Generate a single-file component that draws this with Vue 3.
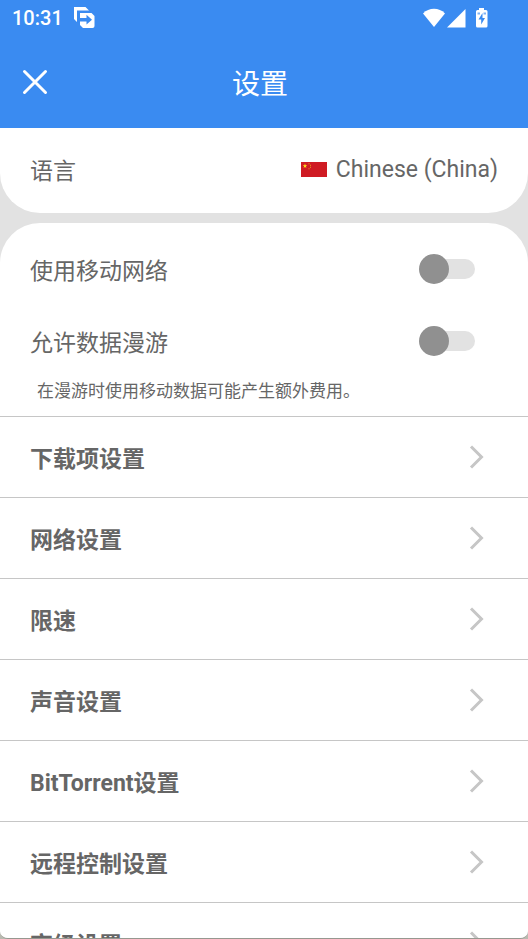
<script setup>
import { ref } from 'vue'

const mobileNetwork = ref(false)
const roaming = ref(false)
const sections = ['下载项设置', '网络设置', '限速', '声音设置', 'BitTorrent设置', '远程控制设置', '高级设置']
</script>

<template>
  <div class="screen">
    <header class="top">
      <div class="status">
        <time class="clock">10:31</time>
        <svg class="copy" width="21" height="22" viewBox="0 0 21 22" aria-hidden="true">
          <path d="M0 0H11.500L15 3.500H3V15L0 12Z" fill="#fff" />
          <path d="M6 6H17.500L20.500 9V19a2 2 0 0 1-2 2H9L6 18Z" fill="#fff" />
          <path d="M6 11H12.500V7.800L18 12.700L12.500 17.500V14.400H6Z" fill="#3a8bf1" />
        </svg>
        <svg class="system" width="66" height="20" viewBox="0 0 66 20" aria-hidden="true">
          <path d="M0 5.500C6-.7 16-.7 22 5.500L11 19Z" fill="#fff" />
          <path d="M24 19.500L42.500 1V19.500Z" fill="#fff" />
          <path d="M56 2V0H61V2H63Q64.500 2 64.500 3.500V18Q64.500 19.500 63 19.500H54.500Q53 19.500 53 18V3.500Q53 2 54.500 2Z" fill="#fff" />
          <path d="M59.500 5L55.500 11.500H58.200V16.500L62 10H59.500Z" fill="#3a8bf1" />
          <path d="M54.500 4.500H57V6.500H54.500ZM60.500 4.500H63V6.500H60.500Z" fill="#3a8bf1" opacity=".65" />
        </svg>
      </div>
      <div class="bar">
        <button class="close" type="button" aria-label="关闭">
          <svg width="26" height="26" viewBox="0 0 26 26" aria-hidden="true">
            <path d="M2.500 2.500L23.500 23.500M23.500 2.500L2.500 23.500" fill="none" stroke="#fff" stroke-width="3" stroke-linecap="round" />
          </svg>
        </button>
        <h1>设置</h1>
      </div>
    </header>

    <main>
      <section class="card language">
        <button class="language-row" type="button">
          <span class="label">语言</span>
          <span class="value">
            <svg width="26" height="15" viewBox="0 0 26 15" aria-hidden="true">
              <rect width="26" height="15" fill="#cf1b23" />
              <path d="M4 1.500L4.600 3.200H6.300L4.900 4.200L5.400 5.900L4 4.900L2.600 5.900L3.100 4.200L1.700 3.200H3.400Z" fill="#ffe21a" />
              <path d="M7.500 1.300h1v1h-1zM9 2.800h1v1H9zM9 4.800h1v1H9zM7.500 6.200h1v1h-1z" fill="#f0a01c" />
            </svg>
            Chinese (China)
          </span>
        </button>
      </section>

      <section class="card options">
        <label class="toggle">
          <span class="label">使用移动网络</span>
          <input v-model="mobileNetwork" type="checkbox" role="switch" />
        </label>
        <label class="toggle">
          <span class="label">允许数据漫游</span>
          <input v-model="roaming" type="checkbox" role="switch" />
        </label>
        <p class="note">在漫游时使用移动数据可能产生额外费用。</p>
        <nav>
          <a v-for="name in sections" :key="name" class="link" href="#">
            <span class="label">{{ name }}</span>
            <svg width="16" height="24" viewBox="0 0 16 24" aria-hidden="true">
              <path d="M2 1.500L12.500 12L2 22.500" fill="none" stroke="#c6c6c6" stroke-width="3" />
            </svg>
          </a>
        </nav>
      </section>
    </main>
  </div>
</template>

<style>
body {
  background: linear-gradient(90deg, #b9bab0 0 15%, #7d8b55 15% 72%, #b9bab0 72%);
}
</style>

<style scoped>
.screen {
  box-sizing: border-box;
  height: 100vh;
  overflow: hidden;
  background: #e2e2e2;
  border-bottom: 1px solid #969890;
  border-radius: 0 0 8px 8px;
  color: #666;
  font-family: Roboto, "Noto Sans CJK SC", sans-serif;
}
.top {
  background: #3a8bf1;
  color: #fff;
}
.status {
  display: flex;
  align-items: center;
  height: 36px;
  padding: 0 39px 0 12px;
}
.clock {
  font-size: 20px;
  font-weight: 500;
  line-height: 36px;
}
.copy {
  margin-left: 11px;
}
.system {
  margin-left: auto;
}
.bar {
  display: grid;
  grid-template-columns: 70px 1fr 78px;
  align-items: center;
  height: 92px;
}
.close {
  display: flex;
  padding: 0 0 0 22px;
  border: 0;
  background: none;
}
h1 {
  margin: 0;
  padding-top: 6px;
  font-size: 28px;
  font-weight: 400;
  line-height: 40px;
  text-align: center;
}
.card {
  background: #fff;
  font-size: 23px;
  line-height: 34px;
}
.language {
  border-radius: 0 0 40px 40px;
}
.language-row {
  display: flex;
  align-items: center;
  justify-content: space-between;
  width: 100%;
  height: 85px;
  padding: 0 30px 2px;
  border: 0;
  background: none;
  color: inherit;
  font: inherit;
}
.label {
  padding-top: 5px;
}
.value {
  display: flex;
  align-items: center;
  gap: 9px;
}
.options {
  margin-top: 10px;
  padding-top: 10px;
  border-radius: 40px 40px 0 0;
}
.toggle {
  display: flex;
  align-items: center;
  justify-content: space-between;
  height: 72px;
  padding: 0 53px 0 30px;
}
input {
  appearance: none;
  position: relative;
  display: flex;
  align-items: center;
  width: 56px;
  height: 30px;
  margin: 0;
}
input::before {
  content: "";
  flex: 1;
  height: 20px;
  margin-left: 8px;
  border-radius: 10px;
  background: #e2e2e2;
}
input::after {
  content: "";
  position: absolute;
  left: 0;
  width: 30px;
  height: 30px;
  border-radius: 50%;
  background: #909090;
}
input:checked::after {
  left: 26px;
  background: #3a8bf1;
}
.note {
  margin: 0;
  padding: 2px 37px 12px;
  font-size: 17px;
  line-height: 25px;
}
.link {
  display: flex;
  align-items: center;
  justify-content: space-between;
  height: 80px;
  padding: 0 43px 0 30px;
  border-top: 1px solid #c6c6c6;
  color: inherit;
  font-weight: 700;
  text-decoration: none;
}
</style>
